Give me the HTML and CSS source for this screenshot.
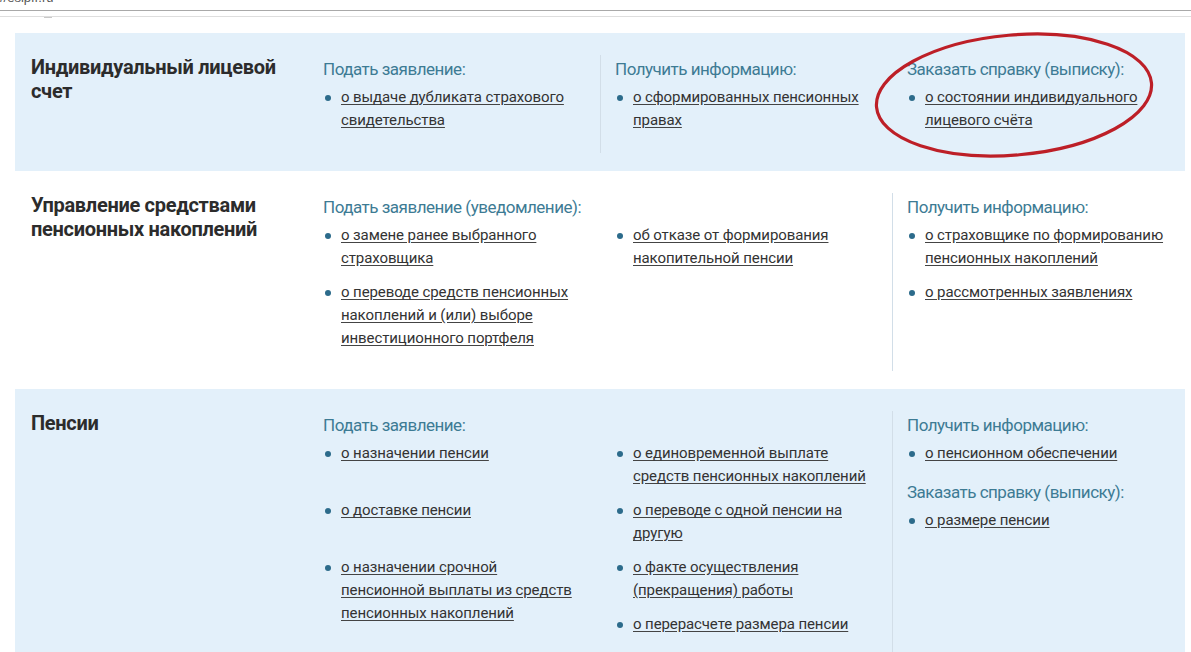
FILE: index.html
```html
<!DOCTYPE html>
<html lang="ru">
<head>
<meta charset="utf-8">
<title>Электронные сервисы</title>
<link rel="stylesheet" href="styles.css">
</head>
<body>
<div class="urlbar"><div class="url">//esipfr.ru</div></div>
<div class="toolbar"><span class="tick"></span></div>
<main class="sections">
  <section class="panel blue">
    <h2 class="title">Индивидуальный лицевой<br>счет</h2>
    <div class="col">
      <h3 class="head">Подать заявление:</h3>
      <ul class="list">
        <li><a href="#">о выдаче дубликата страхового<br>свидетельства</a></li>
      </ul>
    </div>
    <div class="col divided">
      <h3 class="head">Получить информацию:</h3>
      <ul class="list">
        <li><a href="#">о сформированных пенсионных<br>правах</a></li>
      </ul>
    </div>
    <div class="col">
      <h3 class="head">Заказать справку (выписку):</h3>
      <ul class="list">
        <li><a href="#">о состоянии индивидуального<br>лицевого счёта</a></li>
      </ul>
    </div>
    <svg class="mark" width="310" height="135" viewBox="0 0 310 135" aria-hidden="true">
      <ellipse cx="154" cy="67" rx="138" ry="60" transform="rotate(-5 154 67)" fill="none" stroke="#bd1f27" stroke-width="3.2"/>
    </svg>
  </section>

  <section class="panel">
    <h2 class="title">Управление средствами<br>пенсионных накоплений</h2>
    <div class="col span2">
      <h3 class="head">Подать заявление (уведомление):</h3>
      <div class="lists">
        <ul class="list">
          <li><a href="#">о замене ранее выбранного<br>страховщика</a></li>
          <li><a href="#">о переводе средств пенсионных<br>накоплений и (или) выборе<br>инвестиционного портфеля</a></li>
        </ul>
        <ul class="list">
          <li><a href="#">об отказе от формирования<br>накопительной пенсии</a></li>
        </ul>
      </div>
    </div>
    <div class="col divided">
      <h3 class="head">Получить информацию:</h3>
      <ul class="list">
        <li><a href="#">о страховщике по формированию<br>пенсионных накоплений</a></li>
        <li><a href="#">о рассмотренных заявлениях</a></li>
      </ul>
    </div>
  </section>

  <section class="panel blue">
    <h2 class="title">Пенсии</h2>
    <div class="col span2">
      <h3 class="head">Подать заявление:</h3>
      <div class="lists">
        <ul class="list">
          <li class="tall"><a href="#">о назначении пенсии</a></li>
          <li class="tall"><a href="#">о доставке пенсии</a></li>
          <li class="spaced"><a href="#">о назначении срочной<br>пенсионной выплаты из средств<br>пенсионных накоплений</a></li>
          <li><a href="#">о возобновлении выплаты пенсии</a></li>
        </ul>
        <ul class="list">
          <li><a href="#">о единовременной выплате<br>средств пенсионных накоплений</a></li>
          <li><a href="#">о переводе с одной пенсии на<br>другую</a></li>
          <li><a href="#">о факте осуществления<br>(прекращения) работы</a></li>
          <li><a href="#">о перерасчете размера пенсии</a></li>
        </ul>
      </div>
    </div>
    <div class="col divided">
      <h3 class="head">Получить информацию:</h3>
      <ul class="list">
        <li><a href="#">о пенсионном обеспечении</a></li>
      </ul>
      <h3 class="head second">Заказать справку (выписку):</h3>
      <ul class="list">
        <li><a href="#">о размере пенсии</a></li>
      </ul>
    </div>
  </section>
</main>
</body>
</html>
```

FILE: styles.css
```css
html, body {
  margin: 0;
  padding: 0;
  background: #ffffff;
  overflow: hidden;
}

body {
  font-family: Roboto, "Liberation Sans", sans-serif;
  color: #333333;
}

.urlbar {
  height: 10px;
  overflow: hidden;
  border-bottom: 1px solid #a9a9a9;
}

.url {
  font-family: "Liberation Sans", Arial, sans-serif;
  font-size: 13px;
  line-height: 13px;
  margin-top: -9px;
  color: #555555;
  white-space: nowrap;
}

.toolbar {
  height: 5px;
  border-bottom: 1px solid #dedede;
  padding-left: 44px;
  margin-bottom: 16px;
}

.tick {
  display: inline-block;
  vertical-align: top;
  width: 8px;
  height: 0;
  margin-top: 6px;
  border-top: 1px solid #c8c8c8;
}

.sections {
  width: 1170px;
  margin-left: 15px;
}

.panel {
  position: relative;
  display: grid;
  grid-template-columns: 293px 292px 292px 293px;
  padding: 22px 0 18px;
  background: #ffffff;
}

.panel.blue {
  background: #e3f0fa;
}

.title {
  margin: 0;
  padding-left: 16px;
  font-size: 20px;
  line-height: 24px;
  font-weight: 700;
  color: #2c2c2c;
  letter-spacing: -0.3px;
}

.col {
  padding: 2px 10px 10px 15px;
}

.col.divided {
  border-left: 1px solid #d2dee8;
  padding-left: 14px;
}

.col.span2 {
  grid-column: span 2;
  padding-left: 0;
  padding-right: 0;
}

.col.span2 .head {
  padding-left: 15px;
}

.lists {
  display: grid;
  grid-template-columns: 292px 292px;
}

.lists .list {
  padding-left: 15px;
}

.head {
  margin: 0 0 5px;
  font-size: 17px;
  line-height: 24px;
  font-weight: 400;
  color: #3d7b94;
  letter-spacing: -0.5px;
  white-space: nowrap;
}

.head.second {
  margin-top: 15px;
  margin-bottom: 5px;
}

.list {
  list-style: none;
  margin: 0;
  padding: 0;
}

.list li {
  display: flex;
  align-items: flex-start;
  margin-bottom: 11px;
  font-size: 15px;
  line-height: 23px;
  letter-spacing: -0.1px;
  white-space: nowrap;
}

.list li.tall {
  min-height: 46px;
}

.list li.spaced {
  margin-bottom: 23px;
}

.list li::before {
  content: "";
  flex: none;
  width: 6px;
  height: 6px;
  margin: 9px 10px 0 2px;
  border-radius: 50%;
  background: #2c6b8b;
}

.list a {
  color: #333333;
  text-decoration: underline;
  text-decoration-color: #444444;
  text-underline-offset: 2px;
}

.mark {
  position: absolute;
  left: 845px;
  top: -5px;
  pointer-events: none;
}
```
